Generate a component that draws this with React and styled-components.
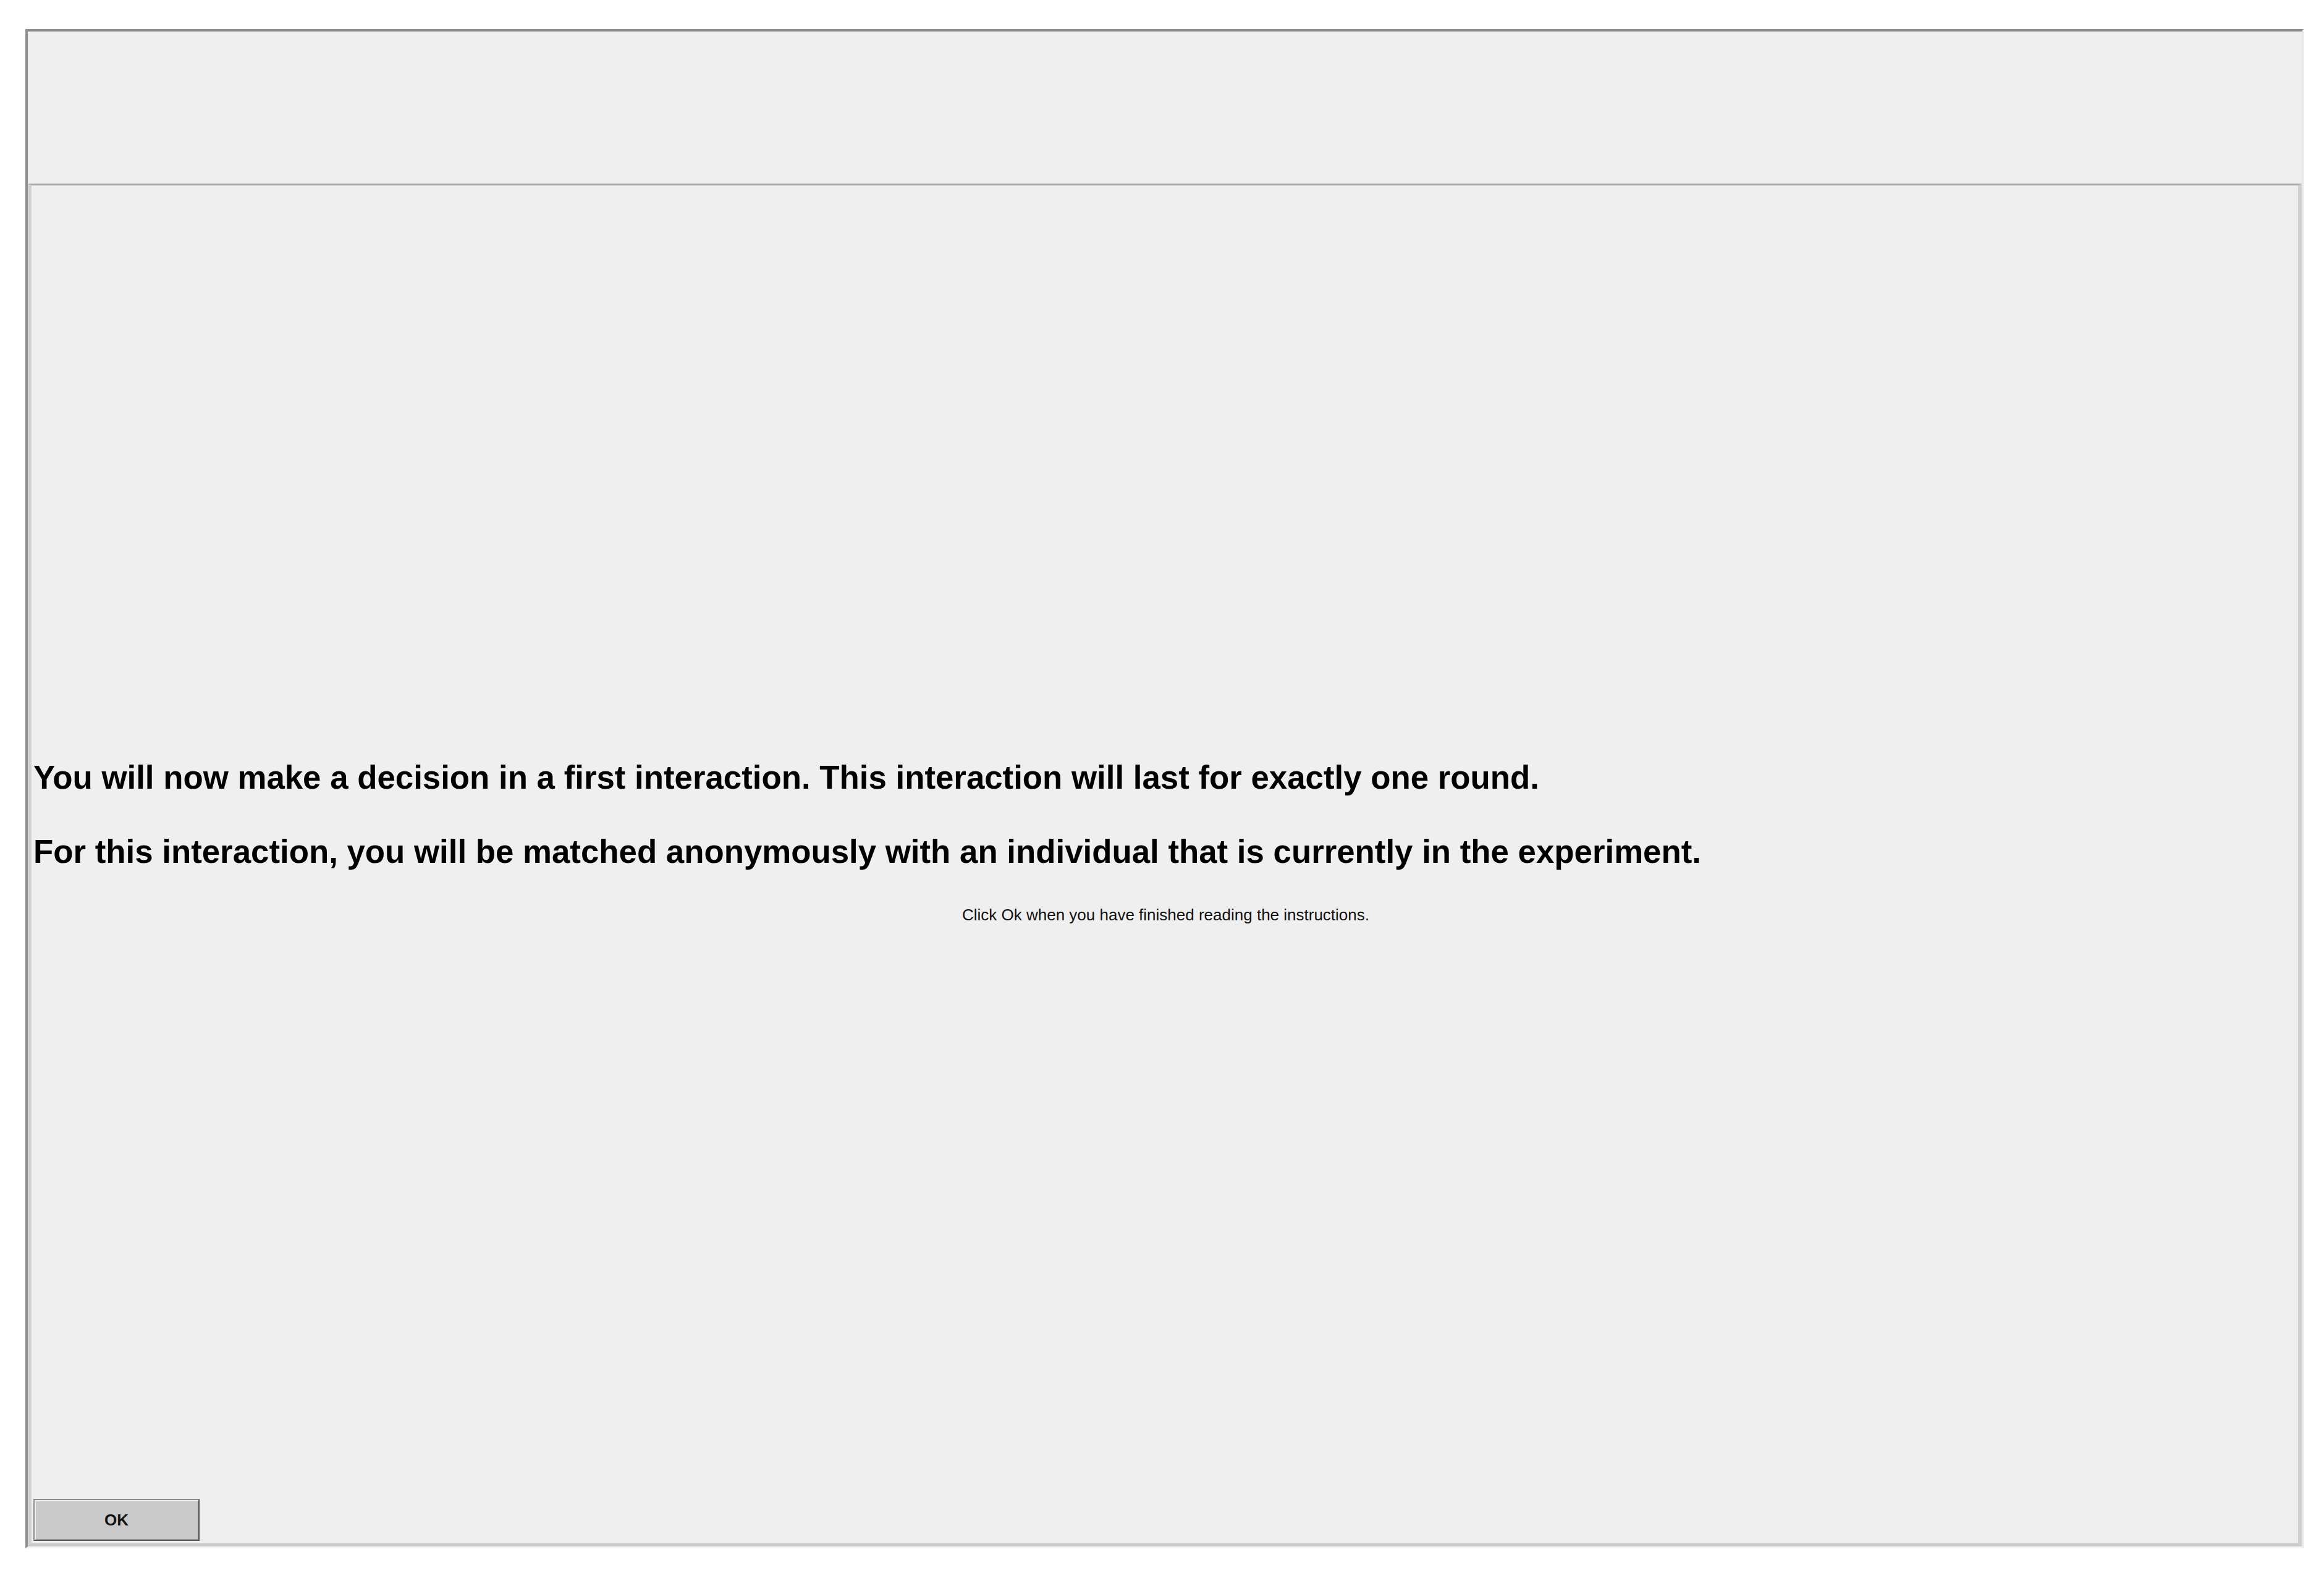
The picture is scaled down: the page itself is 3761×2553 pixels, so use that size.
import React from 'react';
import styled, { createGlobalStyle } from 'styled-components';

const GlobalStyle = createGlobalStyle`
  html, body {
    margin: 0;
    padding: 0;
    background: #ffffff;
  }
  body {
    font-family: "Liberation Sans", Arial, sans-serif;
  }
`;

const Window = styled.div`
  box-sizing: border-box;
  margin: 47px 0 0 41px;
  width: 3687px;
  height: 2458px;
  display: flex;
  flex-direction: column;
  background: #efefef;
  border-top: 4px solid #8f8f8f;
  border-left: 4px solid #8f8f8f;
  border-right: 3px solid #e8e8e8;
  border-bottom: 3px solid #f4f4f4;
`;

const Header = styled.div`
  height: 246px;
  flex-shrink: 0;
  background: #efefef;
`;

const Panel = styled.div`
  box-sizing: border-box;
  flex: 1;
  display: flex;
  flex-direction: column;
  background: #efefef;
  border-top: 3px solid #a8a8a8;
  border-left: 6px solid #d3d3d3;
  border-right: 6px solid #d0d0d0;
  border-bottom: 6px solid #cdcdcd;
  padding: 927px 0 3px 3px;
`;

const Message = styled.p`
  margin: 0 0 59px 0;
  font-size: 52.8px;
  font-weight: bold;
  line-height: 61px;
  color: #000;
  white-space: nowrap;
`;

const Hint = styled.p`
  margin: -2px 0 0 0;
  font-size: 26px;
  line-height: 30px;
  color: #111;
  text-align: center;
`;

const Footer = styled.div`
  margin-top: auto;
  display: flex;
`;

const OkButton = styled.button`
  box-sizing: border-box;
  width: 269px;
  height: 68px;
  background: #c9c9c9;
  border: 2px solid;
  border-color: #8c8c8c #555555 #555555 #8c8c8c;
  box-shadow: inset 2px 2px 0 #f2f2f2, inset -1px -1px 0 #a0a0a0;
  font-family: "Liberation Sans", Arial, sans-serif;
  font-size: 26px;
  font-weight: bold;
  color: #111;
  padding: 0;
  cursor: pointer;
`;

export default function App() {
  return (
    <>
      <GlobalStyle />
      <Window>
        <Header />
        <Panel>
          <Message>You will now make a decision in a first interaction. This interaction will last for exactly one round.</Message>
          <Message>For this interaction, you will be matched anonymously with an individual that is currently in the experiment.</Message>
          <Hint>Click Ok when you have finished reading the instructions.</Hint>
          <Footer>
            <OkButton>OK</OkButton>
          </Footer>
        </Panel>
      </Window>
    </>
  );
}
